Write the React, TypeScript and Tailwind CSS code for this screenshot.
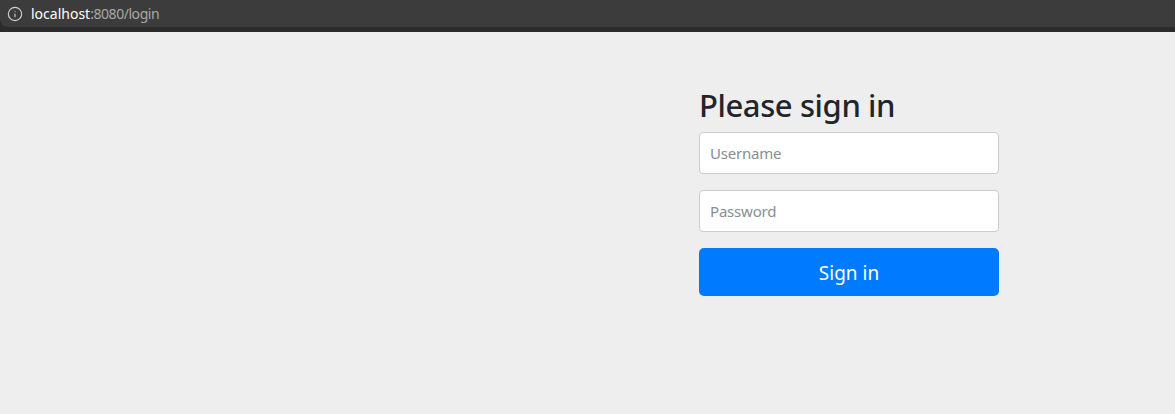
import { Info } from "lucide-react";

const AddressBar = () => {
  return (
    <div className="h-[32px] bg-[#2b2b2b] shrink-0">
      <div className="h-[27px] bg-[#3c3c3c] flex items-center pl-[7px] gap-[8px] rounded-bl-lg">
        <Info className="text-[#cfcfcf]" size={16} strokeWidth={1.7} />
        <div className="text-[14px] leading-none font-['Noto_Sans',sans-serif]">
          <span className="text-white">localhost</span>
          <span className="text-[#a8a8a8] tracking-[-0.45px]">:8080/login</span>
        </div>
      </div>
    </div>
  );
};

export default function App() {
  return (
    <div className="w-[1175px] h-[414px] flex flex-col bg-[#eeeeee] overflow-hidden font-['Noto_Sans',sans-serif]">
      <AddressBar />
      <div className="flex justify-end pr-[176px] pt-[55px]">
        <form className="w-[300px] flex flex-col">
          <h2 className="text-[31px] leading-[37px] tracking-[-0.4px] font-medium text-[#212529] mb-2">
            Please sign in
          </h2>
          <input
            className="h-[42px] w-full px-[10px] bg-white border border-[#cccccc] rounded-[4px] text-[15px] tracking-[-0.2px] placeholder:text-[#868e96] mb-4"
            placeholder="Username"
          />
          <input
            className="h-[42px] w-full px-[10px] bg-white border border-[#cccccc] rounded-[4px] text-[15px] tracking-[-0.2px] placeholder:text-[#868e96] mb-4"
            placeholder="Password"
          />
          <button
            type="button"
            className="h-[48px] w-full bg-[#007bff] text-white text-[19px] pt-[2px] rounded-[5px]"
          >
            Sign in
          </button>
        </form>
      </div>
    </div>
  );
}
